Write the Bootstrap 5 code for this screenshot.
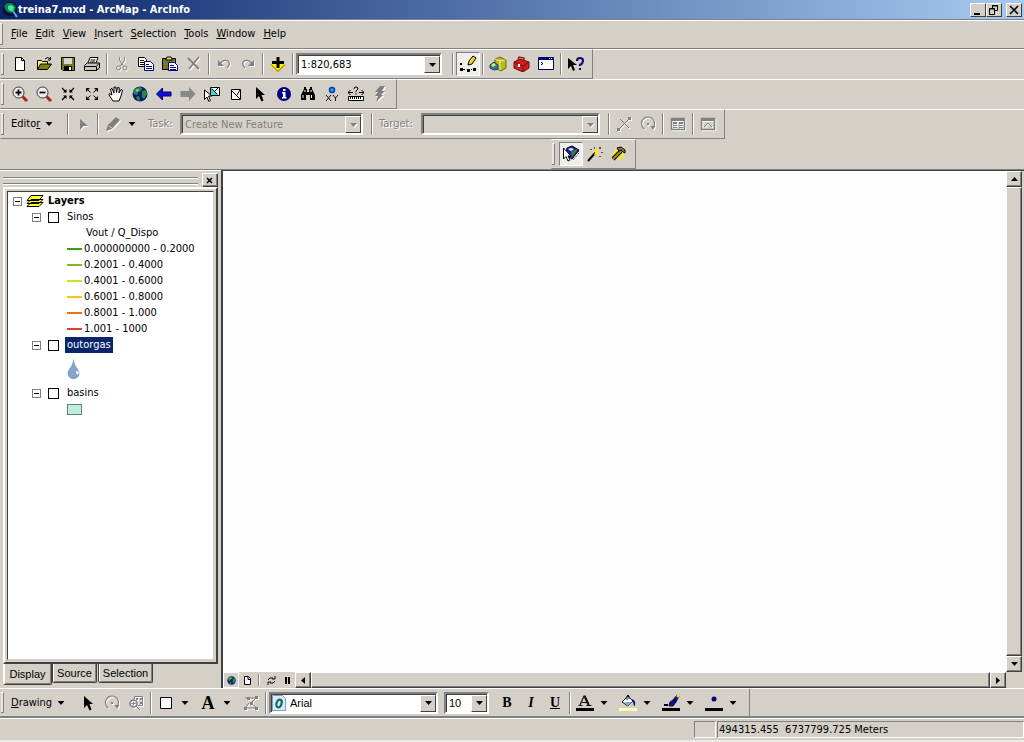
<!DOCTYPE html>
<html lang="en">
<head>
<meta charset="utf-8">
<meta name="viewport" content="width=device-width, initial-scale=1">
<title>treina7.mxd - ArcMap - ArcInfo</title>
<link rel="stylesheet" href="https://cdn.jsdelivr.net/npm/bootstrap@5.3.0/dist/css/bootstrap.min.css">
<style>
:root{--face:#d4d0c8;--shade:#808080;--dark:#404040}
body{background:var(--face);color:#000;font:11px/16px "DejaVu Sans Condensed","DejaVu Sans",sans-serif}
button,select,input{font:inherit;color:inherit}
svg{display:block;flex:none}
.titlebar{height:19px;background:linear-gradient(90deg,#0a246a,#a6caf0);color:#fff;font-weight:700;padding:0 2px}
.wbtn{width:16px;height:14px;padding:0;background:var(--face);border:1px solid;border-color:#fff var(--dark) var(--dark) #fff;border-radius:0;color:#000}
.menubar{height:30px;border-top:1px solid var(--shade);border-bottom:1px solid var(--shade);box-shadow:inset 0 1px #fff;padding:0 0 0 7px}
.menubar a{color:#000;text-decoration:none;padding:0 4px}
.bar{height:30px;width:fit-content;border:1px solid;border-color:#fff var(--shade) var(--shade) transparent;padding:0 4px 0 7px}
.barrow{box-shadow:inset 0 1px #fff}
.grip{position:relative}
.grip::before{content:"";position:absolute;left:0;top:3px;bottom:3px;width:3px;border-right:1px solid var(--shade);border-top:1px solid #fff;border-bottom:1px solid var(--shade);background:#e8e6e0}
.tool{width:24px;height:24px;padding:0;border:0;border-radius:0;background:none;display:flex;align-items:center;justify-content:center;flex:none}
.pressed{border:1px solid;border-color:var(--shade) #fff #fff var(--shade);background:#f0eeea}
.off{color:#808080}
.off svg,svg.off{filter:drop-shadow(1px 1px 0 #fff)}
.offtext{color:#808080;text-shadow:1px 1px #fff}
.vsep{width:2px;height:22px;margin:0 2px;background:linear-gradient(90deg,var(--shade) 50%,#fff 50%);flex:none}
.drop{width:14px;height:24px;padding:0;border:0;background:none;display:flex;align-items:center;justify-content:center;flex:none}
.drop.wide{width:19px;padding-right:5px}
.textbtn{border:0;background:none;padding:0 0 0 3px;height:24px;display:flex;align-items:center;gap:5px;white-space:nowrap;flex:none}
.b-ed{width:57px}.b-dr{width:68px}
.combo{height:22px;border:2px solid;border-color:var(--shade) #fff #fff var(--shade);box-shadow:inset 1px 1px var(--dark);background:#fff;display:flex;align-items:center;padding:1px 0 0 1px;flex:none}
.combo select{appearance:none;border:0;background:none;padding:0 2px;flex:1;min-width:0;height:16px;line-height:16px;outline:0;opacity:1}
.combo .arrow{width:16px;height:100%;background:var(--face);border:1px solid;border-color:#fff var(--dark) var(--dark) #fff;display:flex;align-items:center;justify-content:center;flex:none}
.combo.dim{background:var(--face);color:#808080}
.c-scale{width:146px}.c-task{width:183px}.c-target{width:179px}.c-font{width:169px}.c-size{width:45px}
.lb-task{width:41px;padding-left:9px}.lb-target{width:46px;padding-left:4px}
.gap-side{margin-right:6px}
.raised{border:1px solid;border-color:#fff var(--dark) var(--dark) #fff;box-shadow:inset -1px -1px var(--shade)}
.workspace{border-top:1px solid var(--shade)}
.toc{width:221px;padding:2px 3px 3px;border-top:1px solid #fff;flex:none}
.striped{height:7px;border:solid var(--shade);border-width:1px 0;box-shadow:inset 0 1px #fff,0 1px #fff}
.tocframe{border:2px solid;border-color:#fff var(--dark) var(--dark) #fff;padding:2px}
.tree{background:#fff;border:1px solid;border-color:var(--dark) var(--face) var(--face) var(--dark);padding:1px 0}
.tree ul{list-style:none;margin:0;padding:0}
.node{height:16px;display:flex;align-items:center;white-space:nowrap}
.twist{width:9px;height:9px;border:1px solid var(--shade);padding:0;background:#fff;display:flex;align-items:center;justify-content:center}
.twist::before{content:"";width:5px;height:1px;background:#000}
.tick{appearance:none;width:11px;height:11px;margin:0 6px 0 7px;border:1px solid #000;background:#fff}
.l1{padding-left:5px}.l2{padding-left:24px}.l3{padding-left:59px}
.node label{padding:0 2px}
.node .head{padding-left:19px}
.symbol{height:32px;display:flex;align-items:center}
.chosen{background:#0a246a;color:#fff}
.rule{width:15px;height:2px;margin-right:2px}
.patch{width:15px;height:11px;border:1px solid #6e7c78;background:#beeee0}
.tab{height:19px;width:45px;border:1px solid var(--dark);border-top:0;background:var(--face);padding:0;border-radius:0 0 2px 2px;box-shadow:inset 1px 0 #fff,inset -1px -1px var(--shade)}
.tab.now{height:21px;width:49px;border-left-color:#fff}
.tab.long{width:55px;margin-left:1px}
.ms{font-family:"Liberation Sans",Arial,sans-serif}
.mapview{background:#fdfdfe}
.mapwrap{border:solid var(--dark);border-width:1px 0 0 2px}
.sbtn{width:16px;height:16px;padding:0;background:var(--face);border-radius:0;display:flex;align-items:center;justify-content:center;flex:none}
.vs{margin-right:2px}
.mini{width:16px;height:16px;padding:0;border:0;background:none;display:flex;align-items:center;justify-content:center;flex:none}
.mini.pressed{border:1px solid #fff}
.hsep{height:12px;margin:2px 3px}
.corner{width:18px}
.edge{border-top:1px solid #fff;border-bottom:2px solid var(--shade)}
.edge .bar{border-top:0;border-bottom:0;height:27px}
.serif{font:700 14px/20px "Liberation Serif",serif}
.serif.big{font-size:18px}
.status{height:24px;border-top:1px solid #fff;padding:2px 0 0;border-bottom:2px solid #eceae6}
.cell{border:1px solid;border-color:var(--shade) #fff #fff var(--shade);height:17px;line-height:16px;white-space:pre}
.c-blank{width:22px;margin-right:1px}
.c-coord{width:307px;padding-left:1px}
.push{margin-left:551px}
</style>
</head>
<body class="d-flex flex-column min-vh-100">
<svg width="0" height="0" class="position-absolute" aria-hidden="true">
<symbol id="dn" viewBox="0 0 7 4"><path d="M0 0h7L3.500 4z" fill="currentColor"/></symbol>
<symbol id="ptr" viewBox="0 0 16 16"><path d="M4 1v12l3-3 2.500 5.500 2-1L9.500 9H13z" fill="currentColor"/></symbol>
<symbol id="rot" viewBox="0 0 16 16"><path d="M4.500 13A6.500 6.500 0 1 1 13.500 11" fill="none" stroke="currentColor" stroke-width="1.200"/><path d="M10.500 10h5l-2.500 4z" fill="currentColor"/><path d="M7 7h2v2H7z" fill="currentColor"/></symbol>
<symbol id="earth" viewBox="0 0 16 16"><circle cx="8" cy="8" r="7.500" fill="#0a1c78"/><path d="M3 3q4-3 7-1l-1 3-3 1-1 3-3-1-1-2zM10 5l4-1 1 4-3 5-2-2zM4 11l3-1 1 4-2 1z" fill="#2a8a40"/><path d="M4 4l2-1 1 1-2 2z" fill="#8fe0c0"/></symbol>
</svg>

<header class="titlebar d-flex align-items-center">
<svg width="16" height="17" viewBox="0 0 16 17"><circle cx="8" cy="8" r="7.500" fill="#04123c"/><path d="M2 5l3-3 5 0 4 4-2 5-4 1-4-2z" fill="#16804c"/><path d="M6 5l3-1 3 2-1 4-3 0-2-2z" fill="#35efa0"/><path d="M11 10l4 6" stroke="#5f9fe0" stroke-width="2"/></svg>
<span class="flex-grow-1">treina7.mxd - ArcMap - ArcInfo</span>
<button class="wbtn" aria-label="Minimize"><svg width="14" height="12"><path d="M3 9h6v2H3z"/></svg></button>
<button class="wbtn" aria-label="Restore"><svg width="14" height="12"><path d="M5.500 4V1.500h5v5H8M5 2h6M2.500 5v5.500h5v-6h-5M2 5h6" fill="none" stroke="#000"/></svg></button>
<button class="wbtn ms-1" aria-label="Close"><svg width="14" height="12"><path d="M3 2l8 8M11 2l-8 8" stroke="#000" stroke-width="1.600"/></svg></button>
</header>

<nav class="menubar grip d-flex align-items-center" aria-label="Menu">
<a href="#"><u>F</u>ile</a><a href="#"><u>E</u>dit</a><a href="#"><u>V</u>iew</a><a href="#"><u>I</u>nsert</a><a href="#"><u>S</u>election</a><a href="#"><u>T</u>ools</a><a href="#"><u>W</u>indow</a><a href="#"><u>H</u>elp</a>
</nav>

<div class="barrow"><div class="bar grip d-flex align-items-center" role="toolbar" aria-label="Standard">
<button class="tool" aria-label="New"><svg width="16" height="16"><path d="M3.500 1.500h6l3 3v10h-9z" fill="#fff" stroke="#000"/><path d="M9.500 1.500v3h3" fill="none" stroke="#000"/></svg></button>
<button class="tool" aria-label="Open"><svg width="16" height="16"><path d="M1.500 13.500v-9h4l1 1h5v3" fill="#f4f090" stroke="#000"/><path d="M1.500 13.500l3-5.500h11l-4 5.500z" fill="#808000" stroke="#000"/><path d="M9 3q3-3 5 0M14.500 1v3H12" fill="none" stroke="#000"/></svg></button>
<button class="tool" aria-label="Save"><svg width="16" height="16"><path d="M1.500 1.500h13v13H3l-1.500-1.500z" fill="#787820" stroke="#000"/><path d="M4 2h8v6H4z" fill="#d8d6c8"/><path d="M4 10h8v5H4z" fill="#000"/><path d="M9 11h2v3H9z" fill="#fff"/></svg></button>
<button class="tool" aria-label="Print"><svg width="16" height="16"><path d="M4 7l2-5.500h8L12 7" fill="#fff" stroke="#000"/><path d="M6.500 4h5M6 6h5" stroke="#000"/><path d="M.5 9.500L3 7h12.500v5l-3 2.500H.5z" fill="#c8c8c0" stroke="#000"/><path d="M1 10.500h11l3-3M12.500 10.500v4" fill="none" stroke="#000"/><path d="M7 12h3v1H7z" fill="#d8d800"/></svg></button>
<span class="vsep"></span>
<button class="tool off" aria-label="Cut"><svg width="16" height="16" fill="none" stroke="currentColor"><path d="M5.500 1v3l4 6M10.500 1v3l-4 6" /><circle cx="4.500" cy="12" r="2"/><circle cx="11" cy="12" r="2"/></svg></button>
<button class="tool" aria-label="Copy"><svg width="16" height="16"><path d="M.5 1.500h6l2 2v7h-8z" fill="#fff" stroke="#000"/><path d="M2 4.500h4M2 6.500h5M2 8.500h4" stroke="#000"/><path d="M6.500 5.500h6l3 3v6h-9z" fill="#fff" stroke="#000080"/><path d="M8 8.500h3M8 10.500h6M8 12.500h6" stroke="#000080"/></svg></button>
<button class="tool" aria-label="Paste"><svg width="16" height="16"><path d="M.5 2.500h13v11H.5z" fill="#77772a" stroke="#000"/><path d="M4 3l1-2h4l1 2v1H4z" fill="#e8e060" stroke="#000"/><path d="M6.500 6.500h6l3 3v5h-9z" fill="#fff" stroke="#000080"/><path d="M8 9.500h4M8 11.500h6M8 13.500h6" stroke="#000080"/></svg></button>
<button class="tool off" aria-label="Delete"><svg width="16" height="16"><path d="M2 2l11 11M13 1L3 13" stroke="currentColor" stroke-width="1.800"/></svg></button>
<span class="vsep"></span>
<button class="tool off" aria-label="Undo"><svg width="16" height="16"><path d="M4 8q3-5 8-3 3 3-1 7" fill="none" stroke="currentColor" stroke-width="1.300"/><path d="M2 4v6h6z" fill="currentColor"/></svg></button>
<button class="tool off" aria-label="Redo"><svg width="16" height="16"><path d="M12 8q-3-5-8-3-3 3 1 7" fill="none" stroke="currentColor" stroke-width="1.300"/><path d="M14 4v6H8z" fill="currentColor"/></svg></button>
<span class="vsep"></span>
<button class="tool" aria-label="Add Data"><svg width="16" height="16"><path d="M0 8h16l-8 8z" fill="#ffee00"/><path d="M1 8.500l7 7 7-7" fill="none" stroke="#706800"/><path d="M6.500 1h3v4H14v3H9.500v4h-3V8H2V5h4.500z"/></svg></button>
<span class="vsep"></span>
<div class="combo c-scale me-2"><select aria-label="Scale"><option>1:820,683</option></select><span class="arrow"><svg width="7" height="4"><use href="#dn"/></svg></span></div>
<span class="vsep"></span>
<button class="tool pressed" aria-label="Editor Toolbar"><svg width="18" height="18"><path d="M1 13h3v3H1zM8 14h3v3H8zM14 13h3v3h-3zM1 8h2v2H1zM4 14h2v1H4zM12 14h1v1h-1z"/><path d="M9 10l1-4 4-5 3 2-4 6z" fill="#f0d820" stroke="#000"/></svg></button>
<span class="vsep"></span>
<button class="tool" aria-label="ArcCatalog"><svg width="18" height="16"><path d="M6 3l5-2 6 3v8l-5 3-6-3z" fill="#b8b820" stroke="#6c6c10"/><path d="M6 3l5 2v9M11 5l5-1" fill="none" stroke="#f5f580"/><path d="M1 9l4-3 4 3v4l-4 1-4-2z" fill="#2b7da0" stroke="#183c60"/><path d="M2 9l3-2 2 2-3 2z" fill="#ece65c"/></svg></button>
<button class="tool" aria-label="ArcToolbox"><svg width="18" height="16"><path d="M1 6l6-3 9 3v6l-6 4-9-4z" fill="#d02018" stroke="#601010"/><path d="M1 6l9 4 6-4M10 10v5" fill="none" stroke="#701010"/><path d="M5 4l1-3 5 1v3" fill="none" stroke="#a01414" stroke-width="1.500"/><path d="M5 8h2v3H5z" fill="#fff"/></svg></button>
<button class="tool" aria-label="Command Line"><svg width="16" height="16"><path d="M.5 1.500h15v12H.5z" fill="#fff" stroke="#000060"/><path d="M1 2h14v2H1z" fill="#000080"/><path d="M11 2h1v1h-1zM13 2h1v1h-1z" fill="#fff"/><path d="M3 6l2 1.500L3 9" fill="none" stroke="#000"/></svg></button>
<span class="vsep"></span>
<button class="tool" aria-label="What's This"><svg width="18" height="16"><path d="M1 2v11l3-3 2 5 2-1-2-5h4z"/><path d="M10 5q0-3 3-3t3 3q0 2-3 4v1" fill="none" stroke="#101070" stroke-width="2.200"/><path d="M12 12h2v2h-2z" fill="#101070"/></svg></button>
</div></div>

<div class="barrow"><div class="bar grip d-flex align-items-center" role="toolbar" aria-label="Tools">
<button class="tool" aria-label="Zoom In"><svg width="16" height="16"><path d="M10.500 10.500l4.500 4.500" stroke="#b02020" stroke-width="3"/><circle cx="6.500" cy="6.500" r="5.500" fill="#eee" stroke="#333"/><path d="M3.500 6.500h6M6.500 3.500v6" stroke="#000" stroke-width="1.800"/></svg></button>
<button class="tool" aria-label="Zoom Out"><svg width="16" height="16"><path d="M10.500 10.500l4.500 4.500" stroke="#b02020" stroke-width="3"/><circle cx="6.500" cy="6.500" r="5.500" fill="#eee" stroke="#333"/><path d="M3.500 6.500h6" stroke="#000" stroke-width="1.800"/></svg></button>
<button class="tool" aria-label="Fixed Zoom In"><svg width="16" height="16"><path d="M2 2l4 4M14 2l-4 4M2 14l4-4M14 14l-4-4" stroke="#000" stroke-width="1.300"/><path d="M6.500 3v3.500H3zM9.500 3v3.500H13zM6.500 13V9.500H3zM9.500 13V9.500H13z"/></svg></button>
<button class="tool" aria-label="Fixed Zoom Out"><svg width="16" height="16"><path d="M2 2h4L2 6zM14 2h-4l4 4zM2 14h4l-4-4zM14 14h-4l4-4z"/><path d="M3 3l3.500 3.500M13 3L9.500 6.500M3 13l3.500-3.500M13 13L9.500 9.500" stroke="#000"/></svg></button>
<button class="tool" aria-label="Pan"><svg width="16" height="16"><path d="M5 15l-4-6 .5-1.500L4 9 2.500 3l1.500-.5L6 7V1h1.800L8.500 6.500l1-5 1.800.3-.3 5.200 2-3.500 1.500.7L13 10l-2 5z" fill="#fff" stroke="#000"/></svg></button>
<button class="tool" aria-label="Full Extent"><svg width="16" height="16"><use href="#earth"/></svg></button>
<button class="tool" aria-label="Back"><svg width="16" height="16"><path d="M.5 8l6-6v4H15v4H6.500v4z" fill="#1010d8" stroke="#000060"/></svg></button>
<button class="tool" aria-label="Forward"><svg width="16" height="16"><path d="M15.500 8L9 1v4H.5v6H9v4z" fill="#888"/></svg></button>
<button class="tool" aria-label="Select Features"><svg width="18" height="16"><path d="M7.500 1.500h9v8h-9z" fill="#40d8d0" stroke="#000"/><path d="M9 2h7v7z" fill="#fff"/><path d="M9 3l5 5M12 5l3-3" stroke="#000"/><path d="M1.500 4v9.500L4 11l1.800 4.500 1.700-1L5.500 10H9z" fill="#fff" stroke="#000"/></svg></button>
<button class="tool" aria-label="Clear Selection"><svg width="16" height="16"><path d="M3.500 3.500h9v10h-9z" fill="#fff" stroke="#000"/><path d="M4 5l8 8M9 9l3-5" stroke="#000"/></svg></button>
<button class="tool" aria-label="Select Elements"><svg width="16" height="16"><use href="#ptr"/></svg></button>
<button class="tool" aria-label="Identify"><svg width="16" height="16"><circle cx="8" cy="8" r="7" fill="#000080"/><path d="M7 3h2.500v2H7zM6 6h3.500v5h1v1.500H6V11h1V7.500H6z" fill="#fff"/></svg></button>
<button class="tool" aria-label="Find"><svg width="16" height="16"><path d="M4 1h2v2h1v3h2V3h1V1h2v2l3 6v5h-5V9H6v5H1V9l3-6z"/><path d="M3 9v3M11.500 9v3M5 4v2M11 4v2" stroke="#fff"/></svg></button>
<button class="tool" aria-label="Go To XY"><svg width="16" height="16"><circle cx="8" cy="4" r="2.500" fill="#10b8f0" stroke="#1030b0" stroke-width="1.500"/><path d="M2 9l5 6M7 9l-5 6M9 9l2.500 3L14 9M11.500 12v3" stroke="#111" fill="none"/></svg></button>
<button class="tool" aria-label="Measure"><svg width="16" height="16"><path d="M.5 10.500h15v4H.5z" fill="#fff" stroke="#000"/><path d="M2.500 11v2M4.500 11v2M6.500 11v2M8.500 11v2M10.500 11v2M12.500 11v2M0 6.500h5M11 6.500h5M2.500 4L0 6.500 2.500 9M13.500 4L16 6.500 13.500 9M6 3q0-2 2-2t2 2l-2 2v1M8 7v1.500" fill="none" stroke="#000"/></svg></button>
<button class="tool off" aria-label="Hyperlink"><svg width="16" height="16"><path d="M8 0h5l-3 5h3l-4 4h2l-7 7 2-6H3l3-4H3z" fill="currentColor"/></svg></button>
</div></div>

<div class="barrow"><div class="bar grip d-flex align-items-center" role="toolbar" aria-label="Editor">
<button class="textbtn b-ed"><span>Edito<u>r</u></span><svg width="8" height="4" viewBox="0 0 7 4"><use href="#dn"/></svg></button>
<span class="vsep"></span>
<button class="tool off" aria-label="Edit Tool"><svg width="16" height="16"><path d="M5 3v11l3.500-4H13z" fill="currentColor"/></svg></button>
<span class="vsep"></span>
<button class="tool off" aria-label="Sketch Tool"><svg width="16" height="16"><path d="M1 15l2-6 8-8 4 3-8 9z" fill="currentColor"/><path d="M4 10l3 2" stroke="#d4d0c8"/></svg></button>
<button class="drop" aria-label="Sketch options"><svg width="8" height="4"><use href="#dn"/></svg></button>
<label class="offtext lb-task" for="task">Task:</label>
<div class="combo dim c-task gap-side"><select id="task" disabled><option>Create New Feature</option></select><span class="arrow off"><svg width="7" height="4"><use href="#dn"/></svg></span></div>
<span class="vsep"></span>
<label class="offtext lb-target" for="target">Target:</label>
<div class="combo dim c-target gap-side"><select id="target" disabled><option></option></select><span class="arrow off"><svg width="7" height="4"><use href="#dn"/></svg></span></div>
<span class="vsep"></span>
<button class="tool off" aria-label="Split"><svg width="16" height="16"><path d="M2 14L14 2M4 3l9 9" stroke="currentColor"/><path d="M1 12h3v3H1zM12 1h3v3h-3z" fill="currentColor"/></svg></button>
<button class="tool off" aria-label="Rotate"><svg width="16" height="16"><use href="#rot"/></svg></button>
<span class="vsep"></span>
<button class="tool off" aria-label="Attributes"><svg width="16" height="16"><path d="M1.500 2.500h13v11h-13z" fill="none" stroke="currentColor" stroke-width="1.500"/><path d="M1 2h14v3H1zM3 6h4v2H3zM9 6h4v2H9zM3 9h4v1H3zM9 9h4v1H9zM3 11h4v1H3zM9 11h4v1H9z" fill="currentColor"/></svg></button>
<span class="vsep"></span>
<button class="tool off" aria-label="Sketch Properties"><svg width="16" height="16"><path d="M1.500 2.500h13v11h-13z" fill="none" stroke="currentColor" stroke-width="1.500"/><path d="M1 2h14v3H1z" fill="currentColor"/><path d="M4 11l4-4 4 4" fill="none" stroke="currentColor"/></svg></button>
</div></div>

<div><div class="bar grip push d-flex align-items-center" role="toolbar" aria-label="Network">
<button class="tool pressed" aria-label="Trace Network"><svg width="18" height="18"><path d="M5 3l5-2 7 4-7 9-6-4z" fill="#2020b0" stroke="#000"/><path d="M9 6l7-2-6 8z" fill="#308040"/><path d="M6 4l3-1 3 1-3 2z" fill="#e8e8f8"/><path d="M1.500 3v11L4 11.500 6 16l2-1-2-4h3z" fill="#fff" stroke="#000"/><path d="M9 14l8-8M11 15l6-7" stroke="#222" stroke-dasharray="1 1"/></svg></button>
<button class="tool" aria-label="Wizard"><svg width="16" height="16"><path d="M1 15L9 6" stroke="#000" stroke-width="2"/><path d="M9 2l1 3 3 0-2 2 1 3-3-2-2 1 1-3-2-2 2-.5z" fill="#f5e820"/><path d="M3 3h2v1H3zM7 1h1v2H7zM12 1h2v2h-2zM14 6h2v1h-2zM12 10h2v1h-2z" fill="#804040"/></svg></button>
<button class="tool" aria-label="Build"><svg width="18" height="18"><path d="M9 1l1 3 4-2-1 4 4 1-4 2 2 4-4-1-1 4-3-3-4 2 1-5-3-2 4-1 0-4 3 1z" fill="#f5ee30"/><path d="M3 14l8-8" stroke="#000" stroke-width="4"/><path d="M3 14l8-8" stroke="#a88c28" stroke-width="2"/><path d="M7 3l4-1 4 3v3l-2-1-2-2-2 1z" fill="#777" stroke="#000"/></svg></button>
</div></div>

<main class="workspace d-flex flex-grow-1">
<aside class="toc d-flex flex-column">
<div class="d-flex align-items-center gap-1"><div class="striped flex-grow-1"></div><button class="wbtn raised" aria-label="Close panel"><svg width="13" height="11"><path d="M4 3l5 5M9 3L4 8" stroke="#000" stroke-width="1.600"/></svg></button></div>
<div class="tocframe flex-grow-1 d-flex flex-column"><div class="tree flex-grow-1">
<ul>
<li><div class="node l1 fw-bold"><button class="twist" aria-label="Collapse Layers"></button><svg class="mx-1" width="18" height="14"><path d="M5 8.500h12l-4 4H1zM5 5.500h12l-4 4H1zM5 1.500h12l-4 5H1z" fill="#ffff20" stroke="#000"/></svg><span>Layers</span></div>
<ul>
<li><div class="node l2"><button class="twist" aria-label="Collapse Sinos"></button><input class="tick" type="checkbox" id="s"><label for="s">Sinos</label></div>
<ul>
<li class="node l3"><span class="head">Vout / Q_Dispo</span></li>
<li class="node l3"><i class="rule" style="background:#3c9e16"></i>0.000000000 - 0.2000</li>
<li class="node l3"><i class="rule" style="background:#7cbc18"></i>0.2001 - 0.4000</li>
<li class="node l3"><i class="rule" style="background:#c6e81c"></i>0.4001 - 0.6000</li>
<li class="node l3"><i class="rule" style="background:#f8c818"></i>0.6001 - 0.8000</li>
<li class="node l3"><i class="rule" style="background:#f07018"></i>0.8001 - 1.000</li>
<li class="node l3"><i class="rule" style="background:#e84028"></i>1.001 - 1000</li>
</ul></li>
<li><div class="node l2"><button class="twist" aria-label="Collapse outorgas"></button><input class="tick" type="checkbox" id="o"><label class="chosen" for="o">outorgas</label></div>
<div class="l3 symbol"><svg width="14" height="24"><path d="M6.500 1q.5 6 4 10.500 4 5.500 0 9-4 3.500-8 0-4-3.500 0-9Q6 7 6.500 1z" fill="#86a3cb"/><path d="M9 14l3 1-1 3-2-2z" fill="#fff"/></svg></div></li>
<li><div class="node l2"><button class="twist" aria-label="Collapse basins"></button><input class="tick" type="checkbox" id="b"><label for="b">basins</label></div>
<div class="node l3"><i class="patch"></i></div></li>
</ul></li>
</ul>
</div></div>
<div class="d-flex ms"><button class="tab now">Display</button><button class="tab">Source</button><button class="tab long">Selection</button></div>
</aside>
<section class="mapwrap flex-grow-1 d-flex flex-column">
<div class="d-flex flex-grow-1">
<div class="mapview flex-grow-1"></div>
<div class="d-flex flex-column vs"><button class="sbtn raised" aria-label="Scroll up"><svg width="7" height="4"><path d="M0 4h7L3.500 0z"/></svg></button><div class="raised flex-grow-1"></div><button class="sbtn raised" aria-label="Scroll down"><svg width="7" height="4"><use href="#dn"/></svg></button></div>
</div>
<div class="d-flex">
<button class="mini pressed" aria-label="Data View"><svg width="9" height="9" viewBox="0 0 16 16"><use href="#earth"/></svg></button>
<button class="mini" aria-label="Layout View"><svg width="7" height="9"><path d="M.5.500h4l2 2v6h-6z" fill="#fff" stroke="#000"/><path d="M4 1v2.500h2.500" fill="none" stroke="#000"/></svg></button>
<span class="vsep hsep"></span>
<button class="mini" aria-label="Refresh"><svg width="9" height="9"><path d="M1 4q1-3 5-2M8 5q-1 3-5 2M8 0v3H5M1 9V6h3" fill="none" stroke="#000"/></svg></button>
<button class="mini" aria-label="Pause"><svg width="5" height="7"><path d="M0 0h2v7H0zM3 0h2v7H3z"/></svg></button>
<button class="sbtn raised" aria-label="Scroll left"><svg width="4" height="7"><path d="M4 0v7L0 3.500z"/></svg></button><div class="raised flex-grow-1"></div><button class="sbtn raised" aria-label="Scroll right"><svg width="4" height="7"><path d="M0 0v7l4-3.500z"/></svg></button><span class="corner"></span>
</div>
</section>
</main>

<div class="edge"><div class="bar grip d-flex align-items-center" role="toolbar" aria-label="Drawing">
<button class="textbtn b-dr"><span><u>D</u>rawing</span><svg width="8" height="4" viewBox="0 0 7 4"><use href="#dn"/></svg></button>
<button class="tool" aria-label="Select"><svg width="16" height="16"><use href="#ptr"/></svg></button>
<button class="tool off" aria-label="Rotate element"><svg width="16" height="16"><use href="#rot"/></svg></button>
<button class="tool off" aria-label="Zoom to selected"><svg width="16" height="16"><path d="M6.500 1.500h8v9h-5M6.500 4V1.500" fill="none" stroke="currentColor"/><path d="M8 3h2v2H8zM12 3h2v2h-2zM12 7h2v2h-2z" fill="currentColor"/><circle cx="5.500" cy="8.500" r="3.500" fill="none" stroke="currentColor" stroke-width="1.500"/><path d="M3.500 8.500h4M5.500 6.500v4M8 11l4 4" stroke="currentColor"/></svg></button>
<span class="vsep"></span>
<button class="tool" aria-label="Rectangle"><svg width="12" height="12"><path d="M.5.500h11v11H.5z" fill="#fff" stroke="#000"/></svg></button>
<button class="drop me-1" aria-label="Shapes"><svg width="8" height="4" viewBox="0 0 7 4"><use href="#dn"/></svg></button>
<button class="tool serif big" aria-label="Text">A</button>
<button class="drop wide" aria-label="Text tools"><svg width="8" height="4" viewBox="0 0 7 4"><use href="#dn"/></svg></button>
<button class="tool off" aria-label="Edit vertices"><svg width="16" height="16"><path d="M2 3h11l-5 5 6 5H2l4-5" fill="none" stroke="currentColor"/><path d="M1 12h3v3H1zM12 12h3v3h-3zM12 1h3v3h-3zM4 2h3v3H4zM7 7h3v3H7z" fill="currentColor"/></svg></button>
<span class="vsep"></span>
<div class="combo c-font ms gap-side"><svg width="14" height="16"><path d="M.5.500h10l3 3v12H.5z" fill="#dceafa" stroke="#7c9cc8"/><ellipse cx="7" cy="8.500" rx="2.500" ry="4" transform="rotate(20 7 8.500)" fill="none" stroke="#107060" stroke-width="2.200"/></svg><select aria-label="Font" class="ps-1"><option>Arial</option></select><span class="arrow"><svg width="7" height="4"><use href="#dn"/></svg></span></div>
<div class="combo c-size ms gap-side"><select aria-label="Font size"><option>10</option></select><span class="arrow"><svg width="7" height="4"><use href="#dn"/></svg></span></div>
<button class="tool serif" aria-label="Bold">B</button>
<button class="tool serif fst-italic" aria-label="Italic">I</button>
<button class="tool serif" aria-label="Underline"><u>U</u></button>
<span class="vsep"></span>
<button class="tool" aria-label="Font Color"><svg width="18" height="18"><path d="M4 11L8 2h1l4 9M6 8.500h5M2.500 11.500h4M10.500 11.500h5" fill="none" stroke="#111" stroke-width="1.200"/><path d="M8.500 2l4 9" stroke="#111" stroke-width="2"/><path d="M0 14h18v3H0z"/></svg></button>
<button class="drop wide" aria-label="Font colors"><svg width="8" height="4" viewBox="0 0 7 4"><use href="#dn"/></svg></button>
<button class="tool" aria-label="Fill Color"><svg width="18" height="18"><path d="M3 8l6-6 5 5-5 5z" fill="#fff" stroke="#101040"/><path d="M5 8h8l-4 4z" fill="#90a8c0"/><path d="M8 6V2q1-2 2 0v3" fill="none" stroke="#101040"/><path d="M12 5q5 0 4 7-2-1-2-4z" fill="#101070"/><path d="M0 14h18v3H0z" fill="#ffffb0"/></svg></button>
<button class="drop wide" aria-label="Fill colors"><svg width="8" height="4" viewBox="0 0 7 4"><use href="#dn"/></svg></button>
<button class="tool" aria-label="Line Color"><svg width="18" height="18"><path d="M7 12l1-4 3-2 3 2-3 4zM11 6l4-5 2 1-3 6z" fill="#101090" stroke="#0a0a40"/><path d="M14 2l2-2 2 1-2 3z" fill="#f0e030"/><path d="M2 10h4v2H2z"/><path d="M0 14h18v3H0z"/></svg></button>
<button class="drop wide" aria-label="Line colors"><svg width="8" height="4" viewBox="0 0 7 4"><use href="#dn"/></svg></button>
<button class="tool" aria-label="Marker Color"><svg width="18" height="18"><circle cx="9" cy="5" r="2.500" fill="#000080"/><path d="M0 14h18v3H0z"/></svg></button>
<button class="drop wide" aria-label="Marker colors"><svg width="8" height="4" viewBox="0 0 7 4"><use href="#dn"/></svg></button>
</div></div>

<footer class="status d-flex justify-content-end"><div class="cell c-blank"></div><div class="cell c-coord">494315.455  6737799.725 Meters</div></footer>
<script src="https://cdn.jsdelivr.net/npm/bootstrap@5.3.0/dist/js/bootstrap.bundle.min.js"></script>
</body>
</html>
